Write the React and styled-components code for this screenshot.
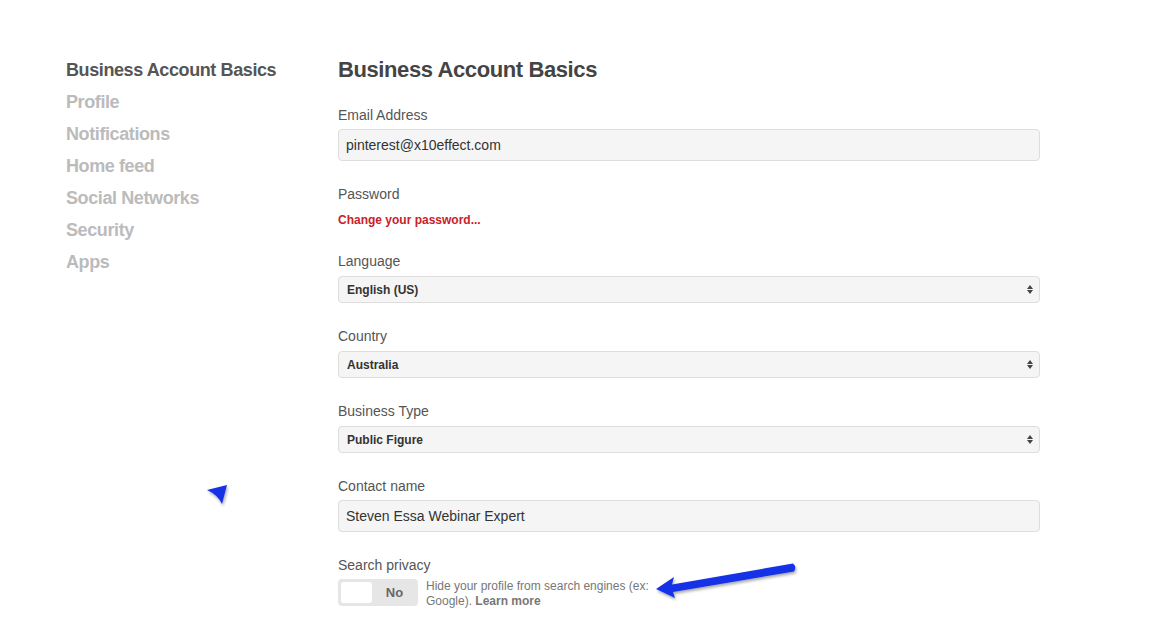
import React from 'react';
import styled, { createGlobalStyle } from 'styled-components';

const GlobalStyle = createGlobalStyle`
  html, body {
    margin: 0;
    padding: 0;
    background: #fff;
    font-family: "Liberation Sans", Arial, sans-serif;
  }
`;

const Page = styled.div`
  position: relative;
  display: flex;
  padding: 57px 0 0 66px;
  width: 1168px;
  height: 626px;
  box-sizing: border-box;
  overflow: hidden;
`;

const Sidebar = styled.nav`
  width: 272px;
  flex-shrink: 0;
  display: flex;
  flex-direction: column;
  margin-top: -3px;
`;

const NavItem = styled.a`
  font-size: 18px;
  font-weight: bold;
  line-height: 32px;
  height: 32px;
  color: ${(p) => (p.$active ? '#555' : '#bbb')};
  text-decoration: none;
  letter-spacing: -0.4px;
`;

const Main = styled.div`
  width: 702px;
  display: flex;
  flex-direction: column;
`;

const Heading = styled.h1`
  margin: 0 0 23px;
  font-size: 22px;
  line-height: 26px;
  font-weight: bold;
  color: #444;
  letter-spacing: -0.4px;
`;

const Field = styled.div`
  display: flex;
  flex-direction: column;
  margin-bottom: 24px;
`;

const Label = styled.label`
  font-size: 14px;
  line-height: 18px;
  color: #555;
  margin-bottom: ${(p) => p.$gap || 5}px;
`;

const TextInput = styled.div`
  height: 32px;
  box-sizing: border-box;
  border: 1px solid #ddd;
  border-radius: 4px;
  background: #f5f5f5;
  padding: 0 7px;
  display: flex;
  align-items: center;
  font-size: 14px;
  color: #333;
`;

const Select = styled.div`
  height: 27px;
  box-sizing: border-box;
  border: 1px solid #ddd;
  border-radius: 4px;
  background: #f5f5f5;
  padding: 0 6px 0 8px;
  display: flex;
  align-items: center;
  justify-content: space-between;
  font-size: 12px;
  font-weight: bold;
  color: #333;
`;

const Arrows = styled.span`
  display: flex;
  flex-direction: column;
  gap: 1px;
  &::before, &::after {
    content: '';
    display: block;
    border-left: 3px solid transparent;
    border-right: 3px solid transparent;
  }
  &::before { border-bottom: 4px solid #444; }
  &::after { border-top: 4px solid #444; }
`;

const RedLink = styled.a`
  margin-top: 4px;
  font-size: 12px;
  line-height: 16px;
  font-weight: bold;
  color: #cb2027;
  text-decoration: none;
`;

const PrivacyRow = styled.div`
  display: flex;
  align-items: flex-start;
  gap: 8px;
`;

const Toggle = styled.div`
  width: 80px;
  height: 27px;
  box-sizing: border-box;
  padding: 3px;
  border-radius: 4px;
  background: #e6e6e6;
  display: flex;
  align-items: center;
  flex-shrink: 0;
`;

const Knob = styled.span`
  width: 31px;
  height: 21px;
  border-radius: 3px;
  background: #fff;
`;

const ToggleText = styled.span`
  flex: 1;
  text-align: center;
  font-size: 13px;
  font-weight: bold;
  color: #666;
  padding-left: 2px;
`;

const Hint = styled.p`
  margin: 0;
  width: 240px;
  font-size: 12px;
  line-height: 15px;
  color: #777;
`;

const Strong = styled.strong`
  font-weight: bold;
  color: #777;
`;

const Overlay = styled.svg`
  position: absolute;
  left: 0;
  top: 0;
  pointer-events: none;
`;

const selectField = (label, value) => (
  <Field>
    <Label $gap={6}>{label}</Label>
    <Select>
      {value}
      <Arrows />
    </Select>
  </Field>
);

export default function App() {
  const nav = ['Profile', 'Notifications', 'Home feed', 'Social Networks', 'Security', 'Apps'];
  return (
    <>
      <GlobalStyle />
      <Page>
        <Sidebar>
          <NavItem $active>Business Account Basics</NavItem>
          {nav.map((n) => (
            <NavItem key={n}>{n}</NavItem>
          ))}
        </Sidebar>
        <Main>
          <Heading>Business Account Basics</Heading>
          <Field>
            <Label>Email Address</Label>
            <TextInput>pinterest@x10effect.com</TextInput>
          </Field>
          <Field>
            <Label>Password</Label>
            <RedLink>Change your password...</RedLink>
          </Field>
          {selectField('Language', 'English (US)')}
          {selectField('Country', 'Australia')}
          {selectField('Business Type', 'Public Figure')}
          <Field>
            <Label>Contact name</Label>
            <TextInput>Steven Essa Webinar Expert</TextInput>
          </Field>
          <Field>
            <Label>Search privacy</Label>
            <PrivacyRow>
              <Toggle>
                <Knob />
                <ToggleText>No</ToggleText>
              </Toggle>
              <Hint>
                Hide your profile from search engines (ex: Google). <Strong>Learn more</Strong>
              </Hint>
            </PrivacyRow>
          </Field>
        </Main>
        <Overlay width="1168" height="626" viewBox="0 0 1168 626">
          <defs>
            <filter id="sh" x="-20%" y="-50%" width="140%" height="200%">
              <feDropShadow dx="1" dy="2" stdDeviation="1.5" floodColor="#000" floodOpacity="0.35" />
            </filter>
          </defs>
          <g filter="url(#sh)" fill="#1433e6">
            <path d="M793 563.5 L672 584.5 L674 577 L656 589 L675 598 L673 592 L794 571.5 Q797 567 793 563.5 Z" />
            <path d="M207 490 L227 485 L222 504 Q218 495 207 490 Z" />
          </g>
        </Overlay>
      </Page>
    </>
  );
}
